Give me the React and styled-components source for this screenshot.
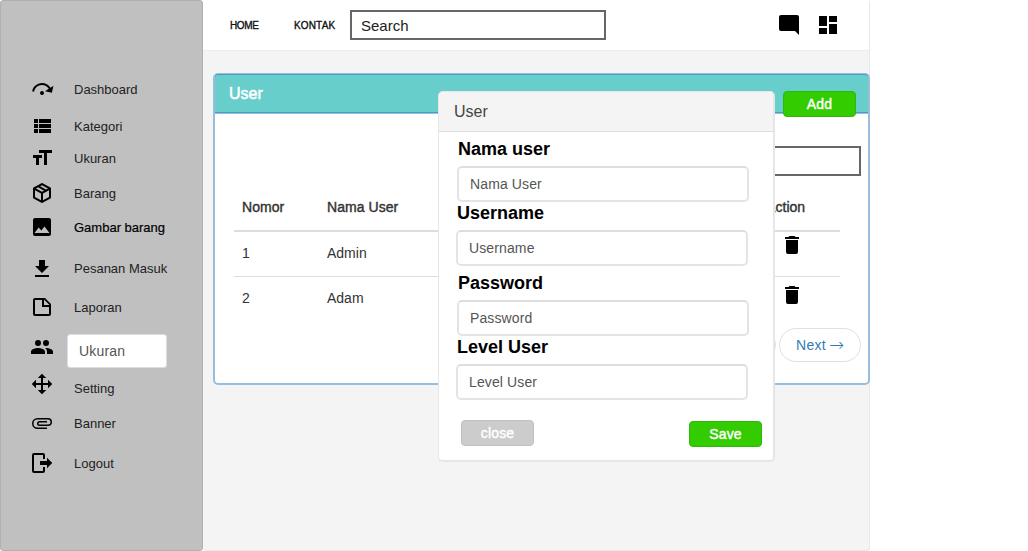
import React from 'react';
import styled, { createGlobalStyle } from 'styled-components';

const GlobalStyle = createGlobalStyle`
  * { box-sizing: border-box; }
  body {
    margin: 0;
    background: #fff;
    font-family: "Liberation Sans", Arial, sans-serif;
    overflow: hidden;
  }
`;

const ICONS = {
  stepOver: 'M12,14A2,2 0 0,1 14,16A2,2 0 0,1 12,18A2,2 0 0,1 10,16A2,2 0 0,1 12,14M23.46,8.86L21.87,15.75L15,14.16L18.8,11.78C17.39,9.5 14.87,8 12,8C8.05,8 4.77,10.86 4.12,14.63L2.15,14.28C2.96,9.58 7.06,6 12,6C15.58,6 18.73,7.89 20.5,10.72L23.46,8.86Z',
  list: 'M9,5V9H21V5M9,19H21V15H9M9,14H21V10H9M4,9H8V5H4M4,19H8V15H4M4,14H8V10H4V14Z',
  size: 'M3,12H6V19H9V12H12V9H3M9,4V7H14V19H17V7H22V4H9Z',
  box: 'M21,16.5C21,16.88 20.79,17.21 20.47,17.38L12.57,21.82C12.41,21.94 12.21,22 12,22C11.79,22 11.59,21.94 11.43,21.82L3.53,17.38C3.21,17.21 3,16.88 3,16.5V7.5C3,7.12 3.21,6.79 3.53,6.62L11.43,2.18C11.59,2.06 11.79,2 12,2C12.21,2 12.41,2.06 12.57,2.18L20.47,6.62C20.79,6.79 21,7.12 21,7.5V16.5M12,4.15L10.11,5.22L16,8.61L17.96,7.5L12,4.15M6.04,7.5L12,10.85L13.96,9.75L8.08,6.35L6.04,7.5M5,15.91L11,19.29V12.58L5,9.21V15.91M19,15.91V9.21L13,12.58V19.29L19,15.91Z',
  image: 'M4.5,18L8.7,12.6L11.3,15.6L14.5,11.6L19.5,18H4.5M21,19V5C21,3.89 20.1,3 19,3H5A2,2 0 0,0 3,5V19A2,2 0 0,0 5,21H19A2,2 0 0,0 21,19Z',
  download: 'M5,20H19V18H5M19,9H15V3H9V9H5L12,16L19,9Z',
  note: 'M14,10H19.5L14,4.5V10M5,3H15L21,9V19A2,2 0 0,1 19,21H5C3.89,21 3,20.1 3,19V5C3,3.89 3.89,3 5,3M5,5V19H19V12H12V5H5Z',
  people: 'M16,13C15.71,13 15.38,13 15.03,13.05C16.19,13.89 17,15 17,16.5V19H23V16.5C23,14.17 18.33,13 16,13M8,13C5.67,13 1,14.17 1,16.5V19H15V16.5C15,14.17 10.33,13 8,13M8,11A3,3 0 0,0 11,8A3,3 0 0,0 8,5A3,3 0 0,0 5,8A3,3 0 0,0 8,11M16,11A3,3 0 0,0 19,8A3,3 0 0,0 16,5A3,3 0 0,0 13,8A3,3 0 0,0 16,11Z',
  move: 'M13,6V11H18V7.75L22.25,12L18,16.25V13H13V18H16.25L12,22.25L7.75,18H11V13H6V16.25L1.75,12L6,7.75V11H11V6H7.75L12,1.75L16.25,6H13Z',
  attachment: 'M7.5,18A5.5,5.5 0 0,1 2,12.5A5.5,5.5 0 0,1 7.5,7H18A4,4 0 0,1 22,11A4,4 0 0,1 18,15H9.5A2.5,2.5 0 0,1 7,12.5A2.5,2.5 0 0,1 9.5,10H17V11.5H9.5A1,1 0 0,0 8.5,12.5A1,1 0 0,0 9.5,13.5H18A2.5,2.5 0 0,0 20.5,11A2.5,2.5 0 0,0 18,8.5H7.5A4,4 0 0,0 3.5,12.5A4,4 0 0,0 7.5,16.5H17V18H7.5Z',
  logout: 'M17,17.25V14H10V10H17V6.75L22.25,12L17,17.25M13,2A2,2 0 0,1 15,4V8H13V4H4V20H13V16H15V20A2,2 0 0,1 13,22H4A2,2 0 0,1 2,20V4A2,2 0 0,1 4,2H13Z',
  comment: 'M22,4A2,2 0 0,0 20,2H4A2,2 0 0,0 2,4V16A2,2 0 0,0 4,18H18L22,22V4Z',
  dashboard: 'M13,3V9H21V3M13,21H21V11H13M3,21H11V15H3M3,13H11V3H3V13Z',
  trash: 'M19,4H15.5L14.5,3H9.5L8.5,4H5V6H19M6,19A2,2 0 0,0 8,21H16A2,2 0 0,0 18,19V7H6V19Z',
};

const Svg = styled.svg`
  display: block;
  flex: none;
  width: 24px;
  height: 24px;
  fill: #000;
`;

const Icon = ({ name }) => (
  <Svg viewBox="0 0 24 24" aria-hidden="true">
    <path d={ICONS[name]} fillRule="evenodd" />
  </Svg>
);

const Page = styled.div`
  position: relative;
  display: flex;
  width: 870px;
  height: 551px;
`;

const Sidebar = styled.nav`
  width: 203px;
  padding: 76px 0 0 29px;
  background: #c0c0c0;
  border: 1px solid #b0b0b0;
  border-radius: 3px;
`;

const NavItem = styled.div`
  display: flex;
  align-items: flex-start;
  gap: 20px;
  height: 24px;
  margin-bottom: ${(p) => p.$gap}px;
`;

const NavLabel = styled.span`
  margin-top: ${(p) => 1 + (p.$shift || 0)}px;
  font-size: 13px;
  line-height: 24px;
  white-space: nowrap;
  color: ${(p) => (p.$strong ? '#000' : '#222')};
  -webkit-text-stroke: ${(p) => (p.$strong ? '0.2px #000' : '0')};
`;

const NavField = styled.div`
  width: 100px;
  height: 34px;
  margin: -1px 0 0 -7px;
  padding-left: 11px;
  border: 1px solid #ddd;
  border-radius: 3px;
  background: #fff;
  color: #555;
  font-size: 14px;
  letter-spacing: 0.2px;
  line-height: 33px;
`;

const Main = styled.main`
  display: flex;
  flex-direction: column;
  width: 667px;
  background: #f4f4f4;
  border: solid #e8e8e8;
  border-width: 0 1px 1px 0;
  border-radius: 3px;
`;

const TopBar = styled.header`
  display: flex;
  align-items: center;
  height: 51px;
  padding-left: 27px;
  background: #fff;
  border-bottom: 1px solid #ececec;
`;

const TopLink = styled.a`
  width: ${(p) => p.$width}px;
  font-size: 10px;
  letter-spacing: ${(p) => p.$spacing}px;
  color: #111;
  -webkit-text-stroke: 0.35px #111;
`;

const SearchBox = styled.div`
  width: 256px;
  height: 30px;
  padding-left: 9px;
  border: 2px solid #666;
  background: #fff;
  color: #222;
  font-size: 15px;
  line-height: 27px;
`;

const TopIcons = styled.div`
  display: flex;
  gap: 15px;
  margin: 0 29px 0 auto;
`;

const Card = styled.section`
  width: 657px;
  height: 312px;
  margin: 22px 0 0 10px;
  border: solid #99bddc;
  border-width: 1px 2px 2px;
  border-radius: 5px;
  background: #fff;
`;

const CardHeader = styled.div`
  display: flex;
  align-items: flex-start;
  height: 40px;
  padding-left: 14px;
  background: #67cecc;
  border-bottom: 1px solid #99bddc;
  border-radius: 3px 3px 0 0;
  box-shadow: inset 0 1px #4a9cc8, inset 0 -1px #4a9cc8;
`;

const CardTitle = styled.h2`
  margin: 0;
  font-size: 16px;
  font-weight: 400;
  line-height: 39px;
  color: #fff;
  -webkit-text-stroke: 0.5px #fff;
`;

const Button = styled.button`
  width: 73px;
  height: 26px;
  padding: 0;
  border: 1px solid ${(p) => (p.$muted ? '#c0c0c0' : '#2eb80a')};
  border-radius: 4px;
  background: ${(p) => (p.$muted ? '#ccc' : '#33cc00')};
  color: #fff;
  font: 14px/24px "Liberation Sans", Arial, sans-serif;
  letter-spacing: 0.15px;
  -webkit-text-stroke: 0.4px #fff;
`;

const AddButton = styled(Button)`
  margin: 17px 12px 0 auto;
`;

const FilterRow = styled.div`
  display: flex;
  justify-content: flex-end;
  padding: 32px 7px 0 0;
`;

const Table = styled.div`
  width: 606px;
  margin: 8px 0 0 19px;
`;

const Row = styled.div`
  display: grid;
  grid-template-columns: 85px 439px 1fr;
  align-items: start;
  height: ${(p) => p.$height}px;
  padding-left: 8px;
  border-bottom: ${(p) => p.$line}px solid #ddd;
  color: #333;
  font-size: 14px;
  line-height: ${(p) => p.$leading}px;
  letter-spacing: ${(p) => (p.$head ? 0.05 : 0)}px;
  -webkit-text-stroke: ${(p) => (p.$head ? '0.4px #333' : '0')};
`;

const TrashCell = styled.div`
  padding: ${(p) => p.$top}px 0 0 14px;
`;

const Pager = styled.div`
  display: flex;
  justify-content: flex-end;
  gap: 3px;
  padding-right: 7px;
  margin-top: 6px;
`;

const Pill = styled.div`
  display: flex;
  gap: 3px;
  width: 82px;
  height: 34px;
  padding-left: 16px;
  border: 1px solid #e0e0e0;
  border-radius: 17px;
  color: #337ab7;
  font-size: 14px;
  letter-spacing: 0.3px;
  line-height: 33px;
  white-space: nowrap;
`;

const Arrow = styled.span`
  font-family: "DejaVu Sans", sans-serif;
  font-size: 18px;
  font-weight: 200;
  line-height: 31px;
`;

const Dialog = styled.section`
  position: absolute;
  left: 438px;
  top: 91px;
  width: 337px;
  height: 371px;
  border: 2px solid #e6e6e6;
  border-width: 1px 2px 2px 1px;
  border-radius: 5px;
  background: #fff;
`;

const DialogHeader = styled.div`
  height: 40px;
  padding-left: 15px;
  background: #f4f4f4;
  border-bottom: 1px solid #ddd;
  border-radius: 4px 4px 0 0;
  color: #444;
  font-size: 16px;
  line-height: 40px;
`;

const Form = styled.div`
  padding: 8px 0 0 17px;
`;

const Field = styled.div`
  margin: 0 0 ${(p) => p.$after}px ${(p) => p.$indent}px;
`;

const FieldLabel = styled.label`
  display: block;
  height: 18px;
  padding-left: 1px;
  color: #000;
  font-size: 18px;
  font-weight: 700;
  line-height: 18px;
`;

const FieldInput = styled.div`
  width: 292px;
  height: 36px;
  margin-top: 8px;
  padding-left: 11px;
  border: 2px solid #e4e4e4;
  border-top-color: #dedede;
  border-radius: 5px;
  color: #555;
  font-size: 14px;
  letter-spacing: 0.12px;
  line-height: 32px;
`;

const DialogActions = styled.div`
  display: flex;
  justify-content: space-between;
  align-items: flex-start;
  padding: 0 11px 0 22px;
`;

const SaveButton = styled(Button)`
  margin-top: 1px;
`;

const NAV = [
  { icon: 'stepOver', label: 'Dashboard', gap: 13 },
  { icon: 'list', label: 'Kategori', gap: 8 },
  { icon: 'size', label: 'Ukuran', gap: 11 },
  { icon: 'box', label: 'Barang', gap: 10 },
  { icon: 'image', label: 'Gambar barang', gap: 18, strong: true },
  { icon: 'download', label: 'Pesanan Masuk', gap: 14, shift: -1 },
  { icon: 'note', label: 'Laporan', gap: 16 },
  { icon: 'people', label: 'Ukuran', gap: 13, field: true },
  { icon: 'move', label: 'Setting', gap: 15, shift: 4 },
  { icon: 'attachment', label: 'Banner', gap: 16 },
  { icon: 'logout', label: 'Logout', gap: 0 },
];

const FIELDS = [
  { label: 'Nama user', hint: 'Nama User', indent: 1, after: 2 },
  { label: 'Username', hint: 'Username', indent: 0, after: 8 },
  { label: 'Password', hint: 'Password', indent: 1, after: 2 },
  { label: 'Level User', hint: 'Level User', indent: 0, after: 20 },
];

export default function App() {
  return (
    <>
      <GlobalStyle />
      <Page>
        <Sidebar>
          {NAV.map((item) => (
            <NavItem key={item.icon} $gap={item.gap}>
              <Icon name={item.icon} />
              {item.field ? (
                <NavField>{item.label}</NavField>
              ) : (
                <NavLabel $shift={item.shift} $strong={item.strong}>{item.label}</NavLabel>
              )}
            </NavItem>
          ))}
        </Sidebar>
        <Main>
          <TopBar>
            <TopLink $width={64} $spacing={-0.35}>HOME</TopLink>
            <TopLink $width={56} $spacing={0.15}>KONTAK</TopLink>
            <SearchBox>Search</SearchBox>
            <TopIcons>
              <Icon name="comment" />
              <Icon name="dashboard" />
            </TopIcons>
          </TopBar>
          <Card>
            <CardHeader>
              <CardTitle>User</CardTitle>
              <AddButton>Add</AddButton>
            </CardHeader>
            <FilterRow>
              <SearchBox />
            </FilterRow>
            <Table>
              <Row $head $height={48} $line={2} $leading={47}>
                <span>Nomor</span>
                <span>Nama User</span>
                <span>Action</span>
              </Row>
              <Row $height={45} $line={1} $leading={43}>
                <span>1</span>
                <span>Admin</span>
                <TrashCell $top={1}><Icon name="trash" /></TrashCell>
              </Row>
              <Row $height={45} $line={0} $leading={43}>
                <span>2</span>
                <span>Adam</span>
                <TrashCell $top={6}><Icon name="trash" /></TrashCell>
              </Row>
            </Table>
            <Pager>
              <Pill />
              <Pill>
                Next
                <Arrow>→</Arrow>
              </Pill>
            </Pager>
          </Card>
        </Main>
        <Dialog>
          <DialogHeader>User</DialogHeader>
          <Form>
            {FIELDS.map((f) => (
              <Field key={f.label} $indent={f.indent} $after={f.after}>
                <FieldLabel>{f.label}</FieldLabel>
                <FieldInput>{f.hint}</FieldInput>
              </Field>
            ))}
          </Form>
          <DialogActions>
            <Button $muted>close</Button>
            <SaveButton>Save</SaveButton>
          </DialogActions>
        </Dialog>
      </Page>
    </>
  );
}
